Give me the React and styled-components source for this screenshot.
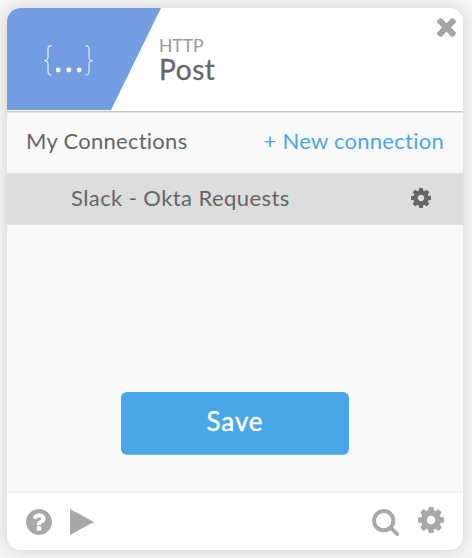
import React from "react";
import styled, { createGlobalStyle } from "styled-components";

const GlobalStyle = createGlobalStyle`
  *, *::before, *::after { box-sizing: border-box; }
  body { margin: 0; background: #f6f6f6; }
`;

const Page = styled.main`
  height: 558px;
  padding: 8px 9px 8px 7px;
  overflow: hidden;
  font-family: Lato, "Open Sans", sans-serif;
  color: #666;
`;

const Card = styled.section`
  display: flex;
  flex-direction: column;
  width: 456px;
  height: 542px;
  border-radius: 14px;
  background: #f9f9f9;
  overflow: hidden;
  box-shadow: 0 0 16px rgba(0, 0, 0, 0.17);
`;

const Header = styled.header`
  display: flex;
  height: 105px;
  background: #fff;
  border-bottom: 1px solid #e0e0e0;
  box-shadow: inset 0 -1px 0 #c8c8c8;
`;

const Brand = styled.div`
  width: 154px;
  height: 102px;
  background: #759de2;
  clip-path: polygon(0 0, 100% 0, 104px 100%, 0 100%);
`;

const Titles = styled.div`
  display: flex;
  flex-direction: column;
  flex: 1;
  padding-top: 27px;
  margin-left: -2px;
`;

const Text = styled.span`
  white-space: nowrap;
  font-size: ${(p) => p.$size}px;
  line-height: ${(p) => p.$line}px;
  letter-spacing: ${(p) => p.$track || 0}px;
  color: ${(p) => p.$color || "#666"};
  -webkit-text-stroke: ${(p) => p.$stroke || 0}px currentColor;
`;

const IconButton = styled.button`
  display: flex;
  padding: 0;
  border: 0;
  background: none;
  color: ${(p) => p.$color || "#a8a8a8"};
  margin: ${(p) => p.$margin || 0};

  svg { display: block; }
`;

const SectionBar = styled.div`
  display: flex;
  justify-content: space-between;
  height: 60px;
  padding: 14px 19px 0;
`;

const ConnectionRow = styled.div`
  display: flex;
  justify-content: space-between;
  align-items: flex-start;
  height: 52px;
  padding: 10px 32px 0 64px;
  background: #ddd;
  border-top: 1px solid #e3e3e3;
  border-bottom: 1px solid #e5e5e5;
`;

const Body = styled.div`
  display: flex;
  flex: 1;
  justify-content: center;
  align-items: flex-start;
  padding-top: 167px;
`;

const SaveButton = styled.button`
  width: 228px;
  height: 63px;
  padding: 0 0 4px;
  border: 0;
  border-bottom: 1px solid #73bbeb;
  border-radius: 6px;
  background: #49a7e8;
  font-family: inherit;
`;

const Footer = styled.footer`
  display: flex;
  justify-content: space-between;
  height: 57px;
  padding: 0 19px;
  background: #fff;
  box-shadow: 0 -1px 2px rgba(0, 0, 0, 0.04);
`;

const Group = styled.div`
  display: flex;
  align-items: flex-start;
`;

const Gear = ({ size }) => (
  <svg width={size} height={size} viewBox="0 128 1536 1536" fill="currentColor">
    <path d="M1024 896q0-106-75-181t-181-75-181 75-75 181 75 181 181 75 181-75 75-181zm512-109v222q0 12-8 23t-20 13l-185 28q-19 54-39 91 35 50 107 138 10 12 10 25t-9 23q-27 37-99 108t-94 71q-12 0-26-9l-138-108q-44 23-91 38-16 136-29 186-7 28-36 28h-222q-14 0-24.5-8.500t-11.500-21.500l-28-184q-49-16-90-37l-141 107q-10 9-25 9-14 0-25-11-126-114-165-168-7-10-7-23 0-12 8-23 15-21 51-66.500t54-70.500q-27-50-41-99l-183-27q-13-2-21-12.500t-8-23.500v-222q0-12 8-23t19-13l186-28q14-46 39-92-40-57-107-138-10-12-10-24 0-10 9-23 26-36 98.500-107.500t94.500-71.500q13 0 26 10l138 107q44-23 91-38 16-136 29-186 7-28 36-28h222q14 0 24.500 8.500t11.500 21.500l28 184q49 16 90 37l142-107q9-9 24-9 13 0 25 10 129 119 165 170 7 8 7 22 0 12-8 23-15 21-51 66.500t-54 70.500q26 50 41 98l183 28q13 2 21 12.500t8 23.500z" />
  </svg>
);

const Cross = () => (
  <svg width="19" height="19" viewBox="110 366 1188 1188" fill="currentColor">
    <path d="M1298 1322q0 40-28 68l-136 136q-28 28-68 28t-68-28l-294-294-294 294q-28 28-68 28t-68-28l-136-136q-28-28-28-68t28-68l294-294-294-294q-28-28-28-68t28-68l136-136q28-28 68-28t68 28l294 294 294-294q28-28 68-28t68 28l136 136q28 28 28 68t-28 68l-294 294 294 294q28 28 28 68z" />
  </svg>
);

const Help = () => (
  <svg width="26" height="26" viewBox="0 128 1536 1536" fill="currentColor">
    <path d="M896 1376v-192q0-14-9-23t-23-9h-192q-14 0-23 9t-9 23v192q0 14 9 23t23 9h192q14 0 23-9t9-23zm256-672q0-88-55.500-163t-138.500-116-170-41q-243 0-371 213-15 24 8 42l132 100q7 6 19 6 16 0 25-12 53-68 86-92 34-24 86-24 48 0 85.500 26t37.500 59q0 38-20 61t-68 45q-63 28-115.500 86.500t-52.500 125.500v36q0 14 9 23t23 9h192q14 0 23-9t9-23q0-19 21.500-49.500t54.500-49.500q32-18 49-28.500t46-35 44.500-48 28-60.500 12.500-81zm384 192q0 209-103 385.500t-279.500 279.500-385.500 103-385.500-103-279.500-279.500-103-385.500 103-385.500 279.500-279.500 385.500-103 385.500 103 279.500 279.500 103 385.500z" />
  </svg>
);

const Search = () => (
  <svg width="28" height="28" viewBox="0 0 28 28" fill="none" stroke="currentColor" strokeLinecap="round">
    <circle cx="11.700" cy="11.700" r="9.600" strokeWidth="4" />
    <path d="M18.700 18.700 25.300 25.300" strokeWidth="3.600" />
  </svg>
);

const Play = () => (
  <svg width="24" height="26" viewBox="0 0 24 26" fill="currentColor">
    <path d="M0 0 24 13 0 26Z" />
  </svg>
);

const BracesMark = () => (
  <svg width="154" height="102" viewBox="0 0 154 102" fill="none">
    <circle cx="62" cy="53" r="33" fill="#719be4" opacity="0.5" />
    <g stroke="#dce7fa" strokeWidth="1.250">
      <path d="M44.500 37.500C41.500 37.500 41 39 41 41V49C41 51 40 52.500 37.500 52.500C40 52.500 41 54 41 56V63.500C41 66 41.800 67 44.500 67" />
      <path d="M78.500 37.500C81.500 37.500 82 39 82 41V49C82 51 83 52.500 85.500 52.500C83 52.500 82 54 82 56V63.500C82 66 81.200 67 78.500 67" />
    </g>
    <g fill="#fff">
      <circle cx="51.200" cy="62" r="2.400" />
      <circle cx="61.800" cy="62" r="2.400" />
      <circle cx="72.200" cy="62" r="2.400" />
    </g>
  </svg>
);

export default function App() {
  return (
    <>
      <GlobalStyle />
      <Page>
        <Card>
          <Header>
            <Brand><BracesMark /></Brand>
            <Titles>
              <Text $size={17.5} $line={22} $color="#999" $track={0}>HTTP</Text>
              <Text $size={28} $line={24} $track={0.6} $stroke={0.3}>Post</Text>
            </Titles>
            <IconButton aria-label="Close" $color="#a4a4a4" $margin="10px 7px 0 0"><Cross /></IconButton>
          </Header>
          <SectionBar>
            <Text $size={22} $line={28} $track={0.27}>My Connections</Text>
            <Text $size={22} $line={28} $track={0.27} $color="#49a7e8">+ New connection</Text>
          </SectionBar>
          <ConnectionRow>
            <Text $size={22} $line={28} $track={0.42}>Slack - Okta Requests</Text>
            <IconButton aria-label="Connection settings" $color="#666" $margin="4px 0 0"><Gear size={20} /></IconButton>
          </ConnectionRow>
          <Body>
            <SaveButton>
              <Text $size={26} $line={30} $color="#fff" $track={0.9} $stroke={0.4}>Save</Text>
            </SaveButton>
          </Body>
          <Footer>
            <Group>
              <IconButton aria-label="Help" $margin="16px 18px 0 0"><Help /></IconButton>
              <IconButton aria-label="Run" $margin="16px 0 0"><Play /></IconButton>
            </Group>
            <Group>
              <IconButton aria-label="Search" $margin="16px 18px 0 0"><Search /></IconButton>
              <IconButton aria-label="Settings" $margin="14px 0 0"><Gear size={26} /></IconButton>
            </Group>
          </Footer>
        </Card>
      </Page>
    </>
  );
}
